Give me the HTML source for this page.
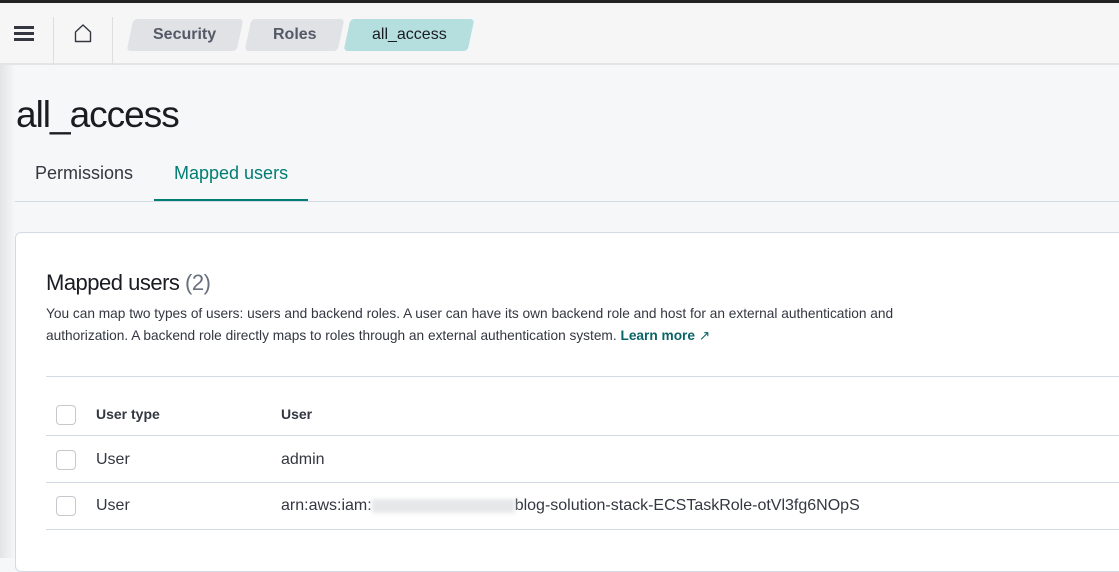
<!DOCTYPE html>
<html><head><style>
*{margin:0;padding:0;box-sizing:border-box}
body{width:1119px;height:558px;overflow:hidden;background:#f6f7f8;font-family:"Liberation Sans",sans-serif;color:#343741;position:relative}
.top{position:absolute;left:0;top:0;width:1119px;height:3px;background:#222}
.hdr{position:absolute;left:0;top:3px;width:1119px;height:62px;background:#f6f6f7;border-bottom:2px solid #e2e4e6}
.sep{position:absolute;top:14px;width:1px;height:48px;background:#dcdfe2}
.crumb{position:absolute;top:16px;height:32px;line-height:32px;text-align:center;font-size:16px;font-weight:bold;color:#535966;transform:skewX(-12deg);border-radius:4px}
.crumb span{display:inline-block;transform:skewX(12deg)}
.ls{position:absolute;left:0;top:65px;width:15px;height:493px;background:linear-gradient(90deg,#e3e4e6,#f6f7f8)}
h1{position:absolute;left:16px;top:94px;font-size:37px;font-weight:normal;color:#1a1c21;letter-spacing:-1px}
.tab{position:absolute;top:163px;font-size:18px}
.panel{position:absolute;left:15px;top:232px;width:1110px;height:340px;background:#fff;border:1px solid #d3dae6;border-radius:6px}
.cb{position:absolute;left:40px;width:20px;height:20px;border:1.5px solid #c5c8cd;border-radius:4px;background:#fff}
.row{position:absolute;left:30px;width:1090px;height:1px;background:#d3dae6}
.t{position:absolute;font-size:16px;color:#343741}
</style></head><body>
<div class="top"></div>
<div class="hdr">
<div style="position:absolute;left:14px;top:23px;width:20px;height:3px;background:#343741;box-shadow:0 6px 0 #343741,0 12px 0 #343741"></div>
<div class="sep" style="left:53px"></div>
<svg style="position:absolute;left:74px;top:20px" width="18" height="20" viewBox="0 0 18 20"><path d="M1.5 9 L9 2 L16.5 9 V18.5 H1.5 Z" fill="none" stroke="#343741" stroke-width="1.4" stroke-linejoin="round"/></svg>
<div class="sep" style="left:112px"></div>
<div class="crumb" style="left:130px;width:110px;background:#e0e2e5"><span>Security</span></div>
<div class="crumb" style="left:248px;width:93px;background:#e0e2e5"><span>Roles</span></div>
<div class="crumb" style="left:347px;width:124px;background:#b5dfdf;font-weight:normal;color:#1a1c21"><span>all_access</span></div>
</div>
<div class="ls"></div>
<h1>all_access</h1>
<div class="tab" style="left:35px;color:#343741">Permissions</div>
<div class="tab" style="left:174px;color:#017d73">Mapped users</div>
<div style="position:absolute;left:154px;top:199px;width:154px;height:2px;background:#017d73"></div>
<div style="position:absolute;left:15px;top:201px;width:1104px;height:1px;background:#d3dae6"></div>
<div class="panel">
<div style="position:absolute;left:30px;top:37px;font-size:22px;color:#1a1c21;letter-spacing:-0.5px">Mapped users <span style="color:#69707d">(2)</span></div>
<div style="position:absolute;left:30px;top:70px;width:900px;font-size:13.7px;line-height:22px;color:#343741">You can map two types of users: users and backend roles. A user can have its own backend role and host for an external authentication and authorization. A backend role directly maps to roles through an external authentication system. <b style="color:#0b6467">Learn more</b> <span style="color:#0b6467">↗</span></div>
<div class="row" style="top:143px"></div>
<div class="cb" style="top:172px"></div>
<div class="t" style="left:80px;top:173px;font-size:14px;font-weight:bold">User type</div>
<div class="t" style="left:265px;top:173px;font-size:14px;font-weight:bold">User</div>
<div class="row" style="top:202px"></div>
<div class="cb" style="top:217px"></div>
<div class="t" style="left:80px;top:218px">User</div>
<div class="t" style="left:265px;top:218px">admin</div>
<div class="row" style="top:249px"></div>
<div class="cb" style="top:263px"></div>
<div class="t" style="left:80px;top:264px">User</div>
<div class="t" style="left:265px;top:264px">arn:aws:iam:<span style="display:inline-block;width:143px;height:14px;background:#e6e7e9;vertical-align:middle;filter:blur(2px)"></span>blog-solution-stack-ECSTaskRole-otVl3fg6NOpS</div>
<div class="row" style="top:296px"></div>
</div>
</body></html>
